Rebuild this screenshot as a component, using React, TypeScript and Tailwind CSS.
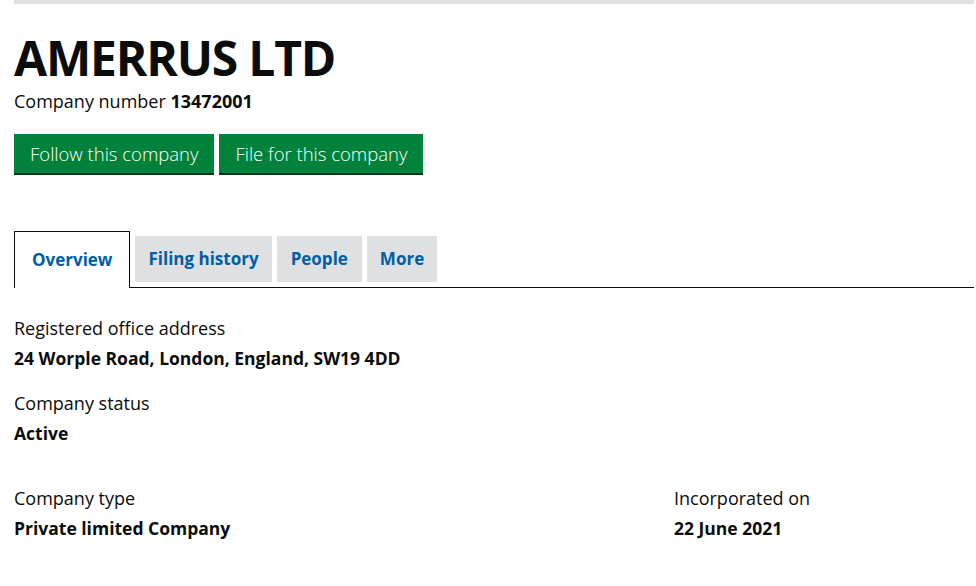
export default function App() {
  const font = { fontFamily: '"Open Sans", Arial, sans-serif' };
  return (
    <div className="bg-white min-h-screen text-[#0b0c0c]" style={font}>
      <div className="mx-[14px] mr-[2px]">
        <div className="h-1 bg-[#dee0e2]" />

        <h1 className="mt-[30px] text-[48px] font-bold leading-[1] tracking-tight">AMERRUS LTD</h1>
        <p className="mt-[7px] text-[18px] leading-[24px]">
          Company number <strong className="font-bold">13472001</strong>
        </p>

        <div className="mt-[21px] flex gap-[5px]">
          <button className="h-[41px] px-[16px] bg-[#00823b] text-white text-[18.5px] font-light border-b-2 border-[#003618]">
            Follow this company
          </button>
          <button className="h-[41px] px-[16px] bg-[#00823b] text-white text-[18.5px] font-light border-b-2 border-[#003618]">
            File for this company
          </button>
        </div>

        <nav className="mt-[56px] flex items-end gap-[5px] border-b border-[#0b0c0c]">
          <div className="-mb-px h-[57px] px-[17px] flex items-center border border-b-0 border-[#0b0c0c] bg-white text-[#005ea5] text-[17px] font-bold">
            Overview
          </div>
          <div className="mb-[5px] h-[46px] px-[13px] flex items-center bg-[#dee0e2] text-[#005ea5] text-[17px] font-bold">
            Filing history
          </div>
          <div className="mb-[5px] h-[46px] px-[14px] flex items-center bg-[#dee0e2] text-[#005ea5] text-[17px] font-bold">
            People
          </div>
          <div className="mb-[5px] h-[46px] px-[13px] flex items-center bg-[#dee0e2] text-[#005ea5] text-[17px] font-bold">
            More
          </div>
        </nav>

        <dl className="mt-[28px] text-[18px] leading-[24px]">
          <dt>Registered office address</dt>
          <dd className="mt-[6px] text-[17.5px] font-bold">24 Worple Road, London, England, SW19 4DD</dd>
          <dt className="mt-[21px]">Company status</dt>
          <dd className="mt-[6px] text-[17.5px] font-bold">Active</dd>
        </dl>

        <div className="mt-[41px] flex text-[18px] leading-[24px]">
          <dl className="w-[660px]">
            <dt>Company type</dt>
            <dd className="mt-[6px] text-[17.5px] font-bold">Private limited Company</dd>
          </dl>
          <dl>
            <dt>Incorporated on</dt>
            <dd className="mt-[6px] text-[17.5px] font-bold">22 June 2021</dd>
          </dl>
        </div>
      </div>
    </div>
  );
}
